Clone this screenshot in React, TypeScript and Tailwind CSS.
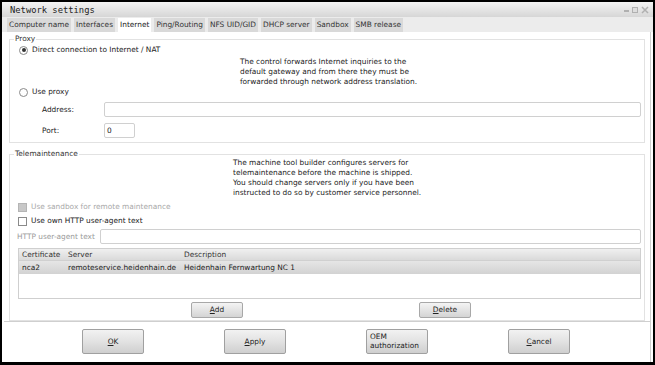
import { useState } from "react";

const tabs = [
  "Computer name",
  "Interfaces",
  "Internet",
  "Ping/Routing",
  "NFS UID/GID",
  "DHCP server",
  "Sandbox",
  "SMB release",
];

function Radio({ checked }: { checked?: boolean }) {
  return (
    <span className="w-[9px] h-[9px] rounded-full border border-[#8a8a8a] bg-white flex items-center justify-center shrink-0">
      {checked && <span className="w-[4px] h-[4px] rounded-full bg-[#333]" />}
    </span>
  );
}

function Check({ disabled }: { disabled?: boolean }) {
  return (
    <span
      className={
        "w-[9px] h-[9px] border shrink-0 " +
        (disabled ? "border-[#b5b5b5] bg-[#c8c8c8]" : "border-[#8a8a8a] bg-white")
      }
    />
  );
}

function SmallButton({ label, u }: { label: string; u: string }) {
  const rest = label.slice(1);
  return (
    <button className="w-[52px] h-[16px] border border-[#a8a8a8] rounded-[2px] bg-gradient-to-b from-[#f4f4f4] to-[#d4d4d4] text-[7.4px] text-[#222] leading-none">
      <span className="underline">{u}</span>
      {rest}
    </button>
  );
}

function BigButton({ children }: { children: React.ReactNode }) {
  return (
    <button className="w-[62px] h-[25px] border border-[#a0a0a0] rounded-[2px] bg-gradient-to-b from-[#f2f2f2] via-[#e2e2e2] to-[#cfcfcf] text-[7.4px] text-[#222] leading-[9px]">
      {children}
    </button>
  );
}

export default function App() {
  const [active, setActive] = useState("Internet");

  return (
    <div
      className="w-[655px] h-[365px] bg-black pt-[2px] pl-[2px] pr-[2px] pb-[3px] text-[7.4px] leading-[10px] text-[#222]"
      style={{ fontFamily: '"DejaVu Sans", Verdana, sans-serif' }}
    >
      <div className="w-full h-full bg-white flex flex-col">
        {/* title bar */}
        <div className="h-[15px] shrink-0 bg-gradient-to-b from-[#f4f4f4] to-[#d6d6d6] flex items-center pl-[8px] pr-[4px]">
          <span
            className="text-[8.8px] text-[#222]"
            style={{ fontFamily: '"DejaVu Sans Mono", "Liberation Mono", monospace' }}
          >
            Network settings
          </span>
          <div className="ml-auto flex items-center gap-[3px]">
            <span className="w-[5px] h-[2px] bg-[#b0b0b0] mt-[3px]" />
            <span className="w-[6px] h-[6px] border border-[#b0b0b0] bg-[#ddd]" />
            <svg width="8" height="8" viewBox="0 0 8 8">
              <path d="M1 1 L7 7 M7 1 L1 7" stroke="#b0b0b0" strokeWidth="1.5" />
            </svg>
          </div>
        </div>

        {/* tab row */}
        <div className="h-[15px] shrink-0 bg-[#ececec] flex items-end pl-[5px] gap-[3px]">
          {tabs.map((t) => (
            <div
              key={t}
              onClick={() => setActive(t)}
              className={
                "h-[14px] px-[2px] flex items-center leading-none cursor-default " +
                (t === active ? "bg-white text-[#222]" : "bg-[#d9d9d9] text-[#333]")
              }
            >
              {t}
            </div>
          ))}
        </div>

        {/* content panel */}
        <div className="h-[290px] shrink-0 mx-[2px] border-r border-b border-[#cfcfcf] px-[5px] pt-[2px] flex flex-col">
          {/* Proxy */}
          <fieldset className="h-[109px] shrink-0 border border-[#e2e2e2] pl-[8px] pr-[3px] pb-0 mx-0">
            <legend className="text-[#333] px-[1px] -ml-[4px] leading-[10px]">Proxy</legend>
            <div className="h-[10px] flex items-center gap-[4px] mt-[1px] ml-[1px]">
              <Radio checked />
              <span>Direct connection to Internet / NAT</span>
            </div>
            <div className="pl-[222px] mt-[2px]">
              The control forwards Internet inquiries to the
              <br />
              default gateway and from there they must be
              <br />
              forwarded through network address translation.
            </div>
            <div className="h-[10px] flex items-center gap-[4px] ml-[1px]">
              <Radio />
              <span>Use proxy</span>
            </div>
            <div className="flex items-center mt-[5px]">
              <span className="w-[86px] pl-[24px]">Address:</span>
              <div className="flex-1 h-[15px] border border-[#d0d0d0] rounded-[2px] bg-white" />
            </div>
            <div className="flex items-center mt-[6px]">
              <span className="w-[86px] pl-[24px]">Port:</span>
              <div className="w-[31px] h-[15px] border border-[#d0d0d0] rounded-[2px] bg-white flex items-center pl-[2px]">
                0
              </div>
            </div>
          </fieldset>

          {/* Telemaintenance */}
          <fieldset className="h-[172px] shrink-0 mt-[6px] border border-[#e2e2e2] pl-[8px] pr-[3px] mx-0 flex flex-col">
            <legend className="text-[#333] px-[1px] -ml-[4px] leading-[10px]">Telemaintenance</legend>
            <div className="pl-[215px] -mt-[1px]">
              The machine tool builder configures servers for
              <br />
              telemaintenance before the machine is shipped.
              <br />
              You should change servers only if you have been
              <br />
              instructed to do so by customer service personnel.
            </div>
            <div className="h-[10px] flex items-center gap-[4px] mt-[4px] text-[#a8a8a8]">
              <Check disabled />
              <span>Use sandbox for remote maintenance</span>
            </div>
            <div className="h-[10px] flex items-center gap-[4px] mt-[4px]">
              <Check />
              <span>Use own HTTP user-agent text</span>
            </div>
            <div className="flex items-center mt-[3px] -ml-[1px]">
              <span className="w-[83px] whitespace-nowrap text-[#9a9a9a]">HTTP user-agent text</span>
              <div className="flex-1 h-[15px] border border-[#d0d0d0] rounded-[2px] bg-white" />
            </div>
            <div className="h-[51px] mt-[4px] border border-[#cfcfcf] bg-white flex flex-col">
              <div className="h-[12px] bg-gradient-to-b from-[#f0f0f0] to-[#dadada] flex items-center text-[#333] border-b border-[#d0d0d0]">
                <span className="w-[47px] pl-[3px]">Certificate</span>
                <span className="w-[116px] pl-[2px]">Server</span>
                <span className="pl-[2px]">Description</span>
              </div>
              <div className="h-[13px] bg-gradient-to-b from-[#e6e6e6] to-[#d2d2d2] flex items-center">
                <span className="w-[47px] pl-[3px]">nca2</span>
                <span className="w-[116px] pl-[2px] whitespace-nowrap">remoteservice.heidenhain.de</span>
                <span className="pl-[2px]">Heidenhain Fernwartung NC 1</span>
              </div>
            </div>
            <div className="flex mt-[3px]">
              <div className="w-[173px]" />
              <SmallButton label="Add" u="A" />
              <div className="w-[176px]" />
              <SmallButton label="Delete" u="D" />
            </div>
          </fieldset>
        </div>

        {/* bottom buttons */}
        <div className="flex-1 flex items-center pl-[80px] gap-[80px] pb-[2px] border-r border-[#cfcfcf] mr-[2px]">
          <BigButton>
            <span className="underline">O</span>K
          </BigButton>
          <BigButton>
            <span className="underline">A</span>pply
          </BigButton>
          <BigButton>
            <span className="block text-left pl-[3px]">
              OEM
              <br />
              authorization
            </span>
          </BigButton>
          <BigButton>
            <span className="underline">C</span>ancel
          </BigButton>
        </div>
      </div>
    </div>
  );
}
